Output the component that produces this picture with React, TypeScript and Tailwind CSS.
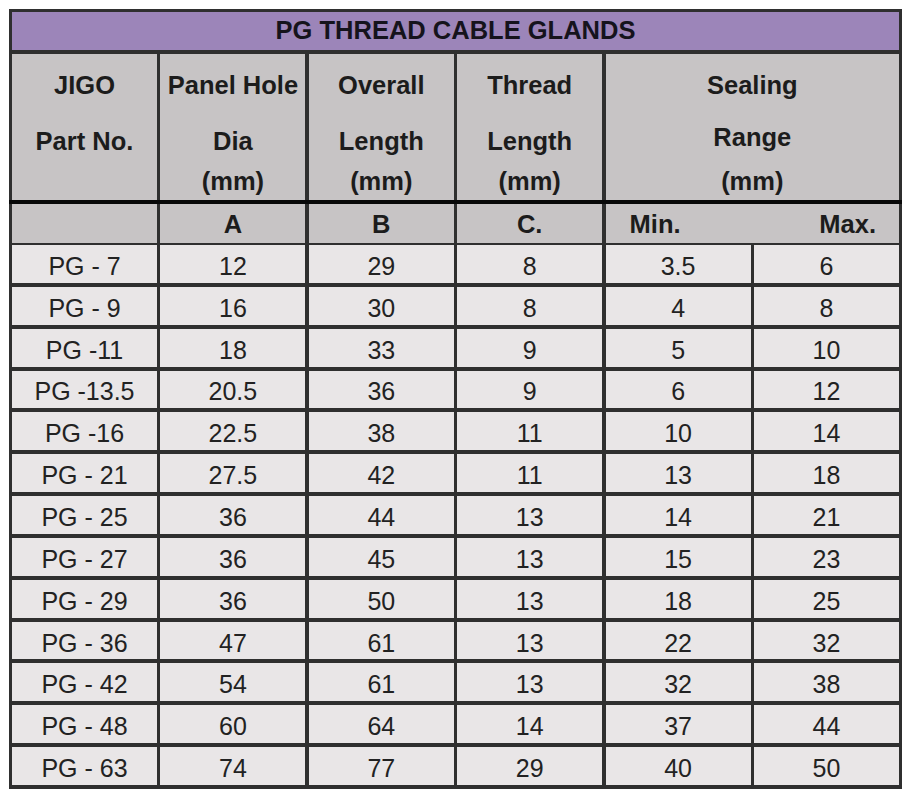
import React from "react";

const rows: string[][] = [
  ["PG - 7", "12", "29", "8", "3.5", "6"],
  ["PG - 9", "16", "30", "8", "4", "8"],
  ["PG -11", "18", "33", "9", "5", "10"],
  ["PG -13.5", "20.5", "36", "9", "6", "12"],
  ["PG -16", "22.5", "38", "11", "10", "14"],
  ["PG - 21", "27.5", "42", "11", "13", "18"],
  ["PG - 25", "36", "44", "13", "14", "21"],
  ["PG - 27", "36", "45", "13", "15", "23"],
  ["PG - 29", "36", "50", "13", "18", "25"],
  ["PG - 36", "47", "61", "13", "22", "32"],
  ["PG - 42", "54", "61", "13", "32", "38"],
  ["PG - 48", "60", "64", "14", "37", "44"],
  ["PG - 63", "74", "77", "29", "40", "50"],
];

const headers: [string, string, string][] = [
  ["JIGO", "Part No.", ""],
  ["Panel Hole", "Dia", "(mm)"],
  ["Overall", "Length", "(mm)"],
  ["Thread", "Length", "(mm)"],
];

export default function App() {
  return (
    <div className="w-[913px] h-[800px] bg-white pt-[9px] pl-[9px] text-[#1c1c1c] font-['Liberation_Sans',Arimo,Helvetica,sans-serif]">
      <div className="w-[893px] bg-[#2f2f2f] p-[3px] pb-[4px] flex flex-col">
        <div className="h-[38px] bg-[#9c85b9] flex items-center justify-center text-[25.5px] font-bold leading-none text-[#15131c]">
          PG THREAD CABLE GLANDS
        </div>
        <div className="h-[4px]" />
        <div className="grid grid-cols-6 gap-x-[3.4px] h-[146px]">
          {headers.map((h, i) => (
            <div key={i} className="bg-[#c7c4c5] flex flex-col items-center text-[25.5px] font-bold pt-[16px]">
              <div className="h-[30px] leading-[30px]">{h[0]}</div>
              <div className="h-[30px] leading-[30px] mt-[26px]">{h[1]}</div>
              <div className="h-[30px] leading-[30px] mt-[10px]">{h[2]}</div>
            </div>
          ))}
          <div className="col-span-2 bg-[#c7c4c5] flex flex-col items-center text-[25.5px] font-bold pt-[16px]">
            <div className="h-[30px] leading-[30px]">Sealing</div>
            <div className="h-[30px] leading-[30px] mt-[22px]">Range</div>
            <div className="h-[30px] leading-[30px] mt-[14px]">(mm)</div>
          </div>
        </div>
        <div className="h-[4px] bg-[#080808] -mx-[3px]" />
        <div className="grid grid-cols-6 gap-x-[3.4px] h-[37px] text-[25.5px] font-bold">
          <div className="bg-[#c7c4c5]" />
          <div className="bg-[#c7c4c5] flex items-center justify-center pt-[1px]">A</div>
          <div className="bg-[#c7c4c5] flex items-center justify-center pt-[1px]">B</div>
          <div className="bg-[#c7c4c5] flex items-center justify-center pt-[1px]">C.</div>
          <div className="col-span-2 bg-[#c7c4c5] flex items-center justify-between pl-[24px] pr-[23px] pt-[1px]">
            <span>Min.</span>
            <span>Max.</span>
          </div>
        </div>
        <div className="h-[4px]" />
        <div className="flex flex-col gap-y-[4px]">
          {rows.map((r, i) => (
            <div key={i} className="grid grid-cols-6 gap-x-[3.4px] h-[37.85px] text-[25px]">
              {r.map((c, j) => (
                <div key={j} className="bg-[#e9e6e7] flex items-center justify-center leading-none pt-[5px] text-[#222]">
                  {c}
                </div>
              ))}
            </div>
          ))}
        </div>
      </div>
    </div>
  );
}
